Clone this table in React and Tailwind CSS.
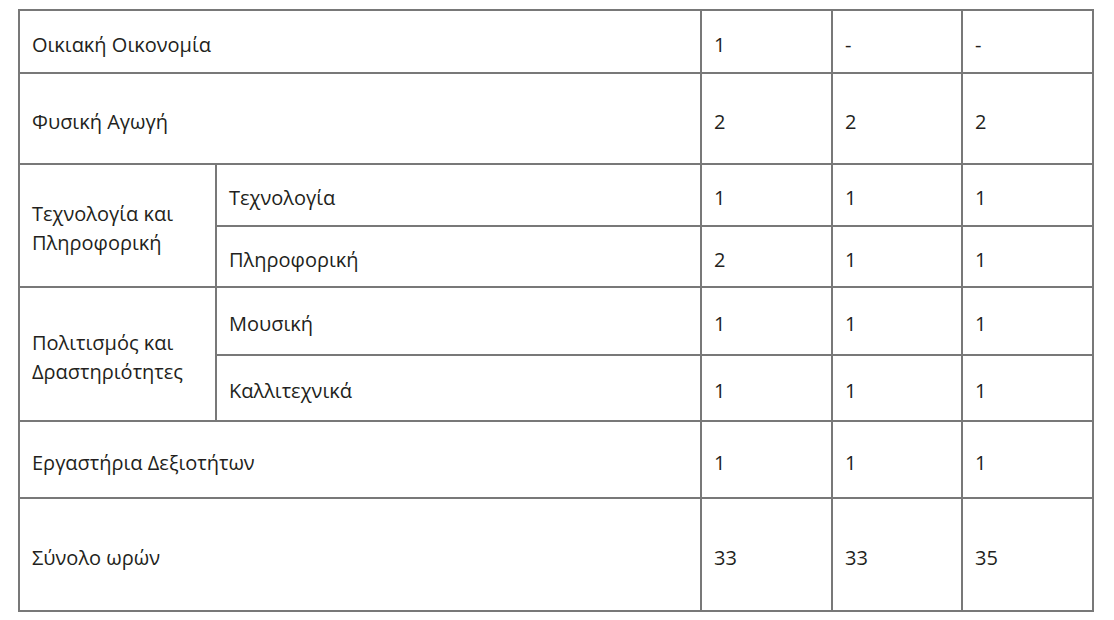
export default function App() {
  const cell = "bg-white flex items-center pl-[12px] pr-2 pt-[5px] text-[20px] leading-[29px] text-[#231f20]";
  const rows = [
    { type: "single", label: "Οικιακή Οικονομία", vals: ["1", "-", "-"], h: "h-[61px]" },
    { type: "single", label: "Φυσική Αγωγή", vals: ["2", "2", "2"], h: "h-[89px]" },
  ];
  return (
    <div className="w-[1114px] h-[620px] bg-white overflow-hidden" style={{ fontFamily: '"Open Sans", "Noto Sans", sans-serif' }}>
      <div className="ml-[18px] mt-[9px] w-[1076px] grid grid-cols-[195px_483px_129px_128px_129px] grid-rows-[61px_89px_60px_59px_66px_64px_75px_111px] gap-[2px] p-[2px] bg-[#787878]">
        <div className={`${cell} col-span-2`}>Οικιακή Οικονομία</div>
        <div className={cell}>1</div>
        <div className={cell}>-</div>
        <div className={cell}>-</div>

        <div className={`${cell} col-span-2`}>Φυσική Αγωγή</div>
        <div className={cell}>2</div>
        <div className={cell}>2</div>
        <div className={cell}>2</div>

        <div className={`${cell} row-span-2`}>Τεχνολογία και<br />Πληροφορική</div>
        <div className={cell}>Τεχνολογία</div>
        <div className={cell}>1</div>
        <div className={cell}>1</div>
        <div className={cell}>1</div>
        <div className={cell}>Πληροφορική</div>
        <div className={cell}>2</div>
        <div className={cell}>1</div>
        <div className={cell}>1</div>

        <div className={`${cell} row-span-2`}>Πολιτισμός και<br />Δραστηριότητες</div>
        <div className={cell}>Μουσική</div>
        <div className={cell}>1</div>
        <div className={cell}>1</div>
        <div className={cell}>1</div>
        <div className={cell}>Καλλιτεχνικά</div>
        <div className={cell}>1</div>
        <div className={cell}>1</div>
        <div className={cell}>1</div>

        <div className={`${cell} col-span-2`}>Εργαστήρια Δεξιοτήτων</div>
        <div className={cell}>1</div>
        <div className={cell}>1</div>
        <div className={cell}>1</div>

        <div className={`${cell} col-span-2`}>Σύνολο ωρών</div>
        <div className={cell}>33</div>
        <div className={cell}>33</div>
        <div className={cell}>35</div>
      </div>
    </div>
  );
}
